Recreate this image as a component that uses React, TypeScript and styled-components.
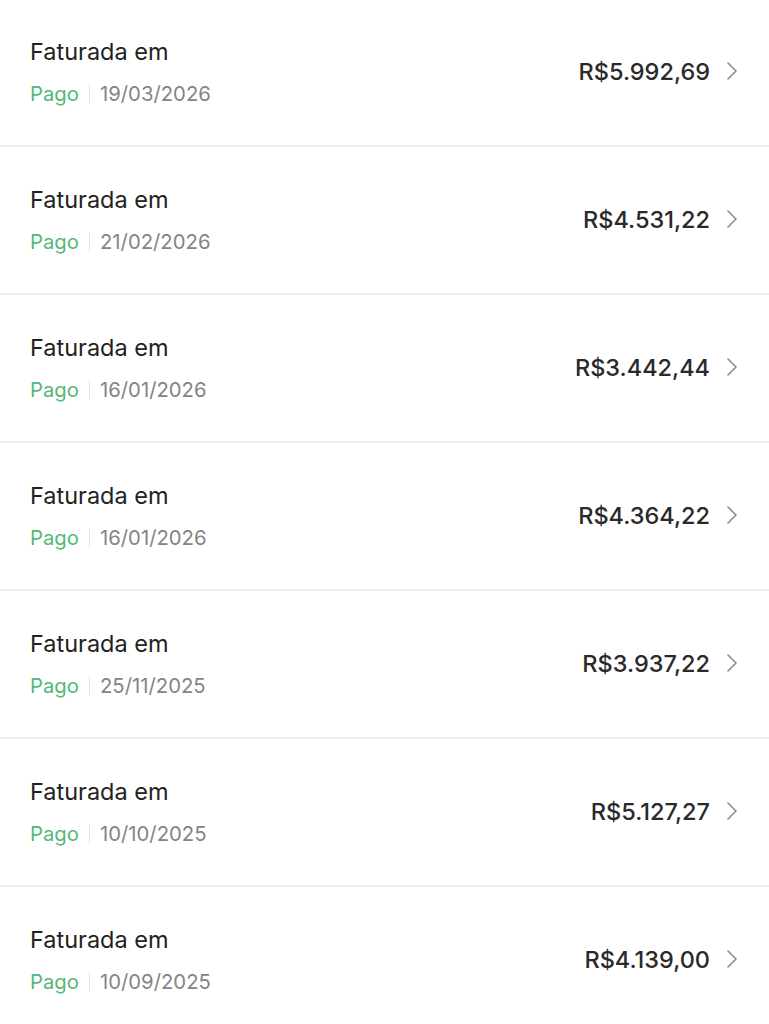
import { FC } from "react";
import styled, { createGlobalStyle } from "styled-components";

interface Invoice {
  date: string;
  amount: string;
}

const invoices: Invoice[] = [
  { date: "19/03/2026", amount: "R$5.992,69" },
  { date: "21/02/2026", amount: "R$4.531,22" },
  { date: "16/01/2026", amount: "R$3.442,44" },
  { date: "16/01/2026", amount: "R$4.364,22" },
  { date: "25/11/2025", amount: "R$3.937,22" },
  { date: "10/10/2025", amount: "R$5.127,27" },
  { date: "10/09/2025", amount: "R$4.139,00" },
];

const GlobalStyle = createGlobalStyle`
  body {
    margin: 0;
    background: #fff;
    font-family: Inter, "Noto Sans", sans-serif;
    -webkit-font-smoothing: antialiased;
  }
`;

const Chevron: FC = () => (
  <svg width="14" height="22" viewBox="0 0 14 22" fill="none">
    <path d="M3 3l8 8-8 8" stroke="#8a8a8a" strokeWidth="1.6" strokeLinecap="round" strokeLinejoin="round" />
  </svg>
);

const App: FC = () => {
  return (
    <>
      <GlobalStyle />
      <List>
        {invoices.map((inv, i) => (
          <Row key={i}>
            <Info>
              <Title>Faturada em</Title>
              <Meta>
                <Status>Pago</Status>
                <Divider />
                <DateText>{inv.date}</DateText>
              </Meta>
            </Info>
            <Right>
              <Amount>{inv.amount}</Amount>
              <Chevron />
            </Right>
          </Row>
        ))}
      </List>
    </>
  );
};

export default App;

const List = styled.div`
  display: flex;
  flex-direction: column;
  width: 100%;
  margin-top: -1px;
`;

const Row = styled.div`
  display: flex;
  align-items: center;
  justify-content: space-between;
  height: 146px;
  padding: 0 30px;
  border-bottom: 2px solid #eeeeee;
`;

const Info = styled.div`
  display: flex;
  flex-direction: column;
  gap: 14px;
  margin-top: 1px;
`;

const Title = styled.div`
  font-size: 23.5px;
  line-height: 28px;
  color: #222;
`;

const Meta = styled.div`
  display: flex;
  align-items: center;
  font-size: 20.3px;
  line-height: 28px;
`;

const Status = styled.span`
  color: #55b876;
`;

const Divider = styled.span`
  width: 1px;
  height: 18px;
  background: #e3e3e3;
  margin: 0 10px;
`;

const DateText = styled.span`
  color: #848484;
`;

const Right = styled.div`
  display: flex;
  align-items: center;
  gap: 15px;
  margin-right: 0;
  margin-bottom: 2px;
`;

const Amount = styled.div`
  font-size: 23.5px;
  font-weight: 500;
  color: #2a2a2a;
`;
